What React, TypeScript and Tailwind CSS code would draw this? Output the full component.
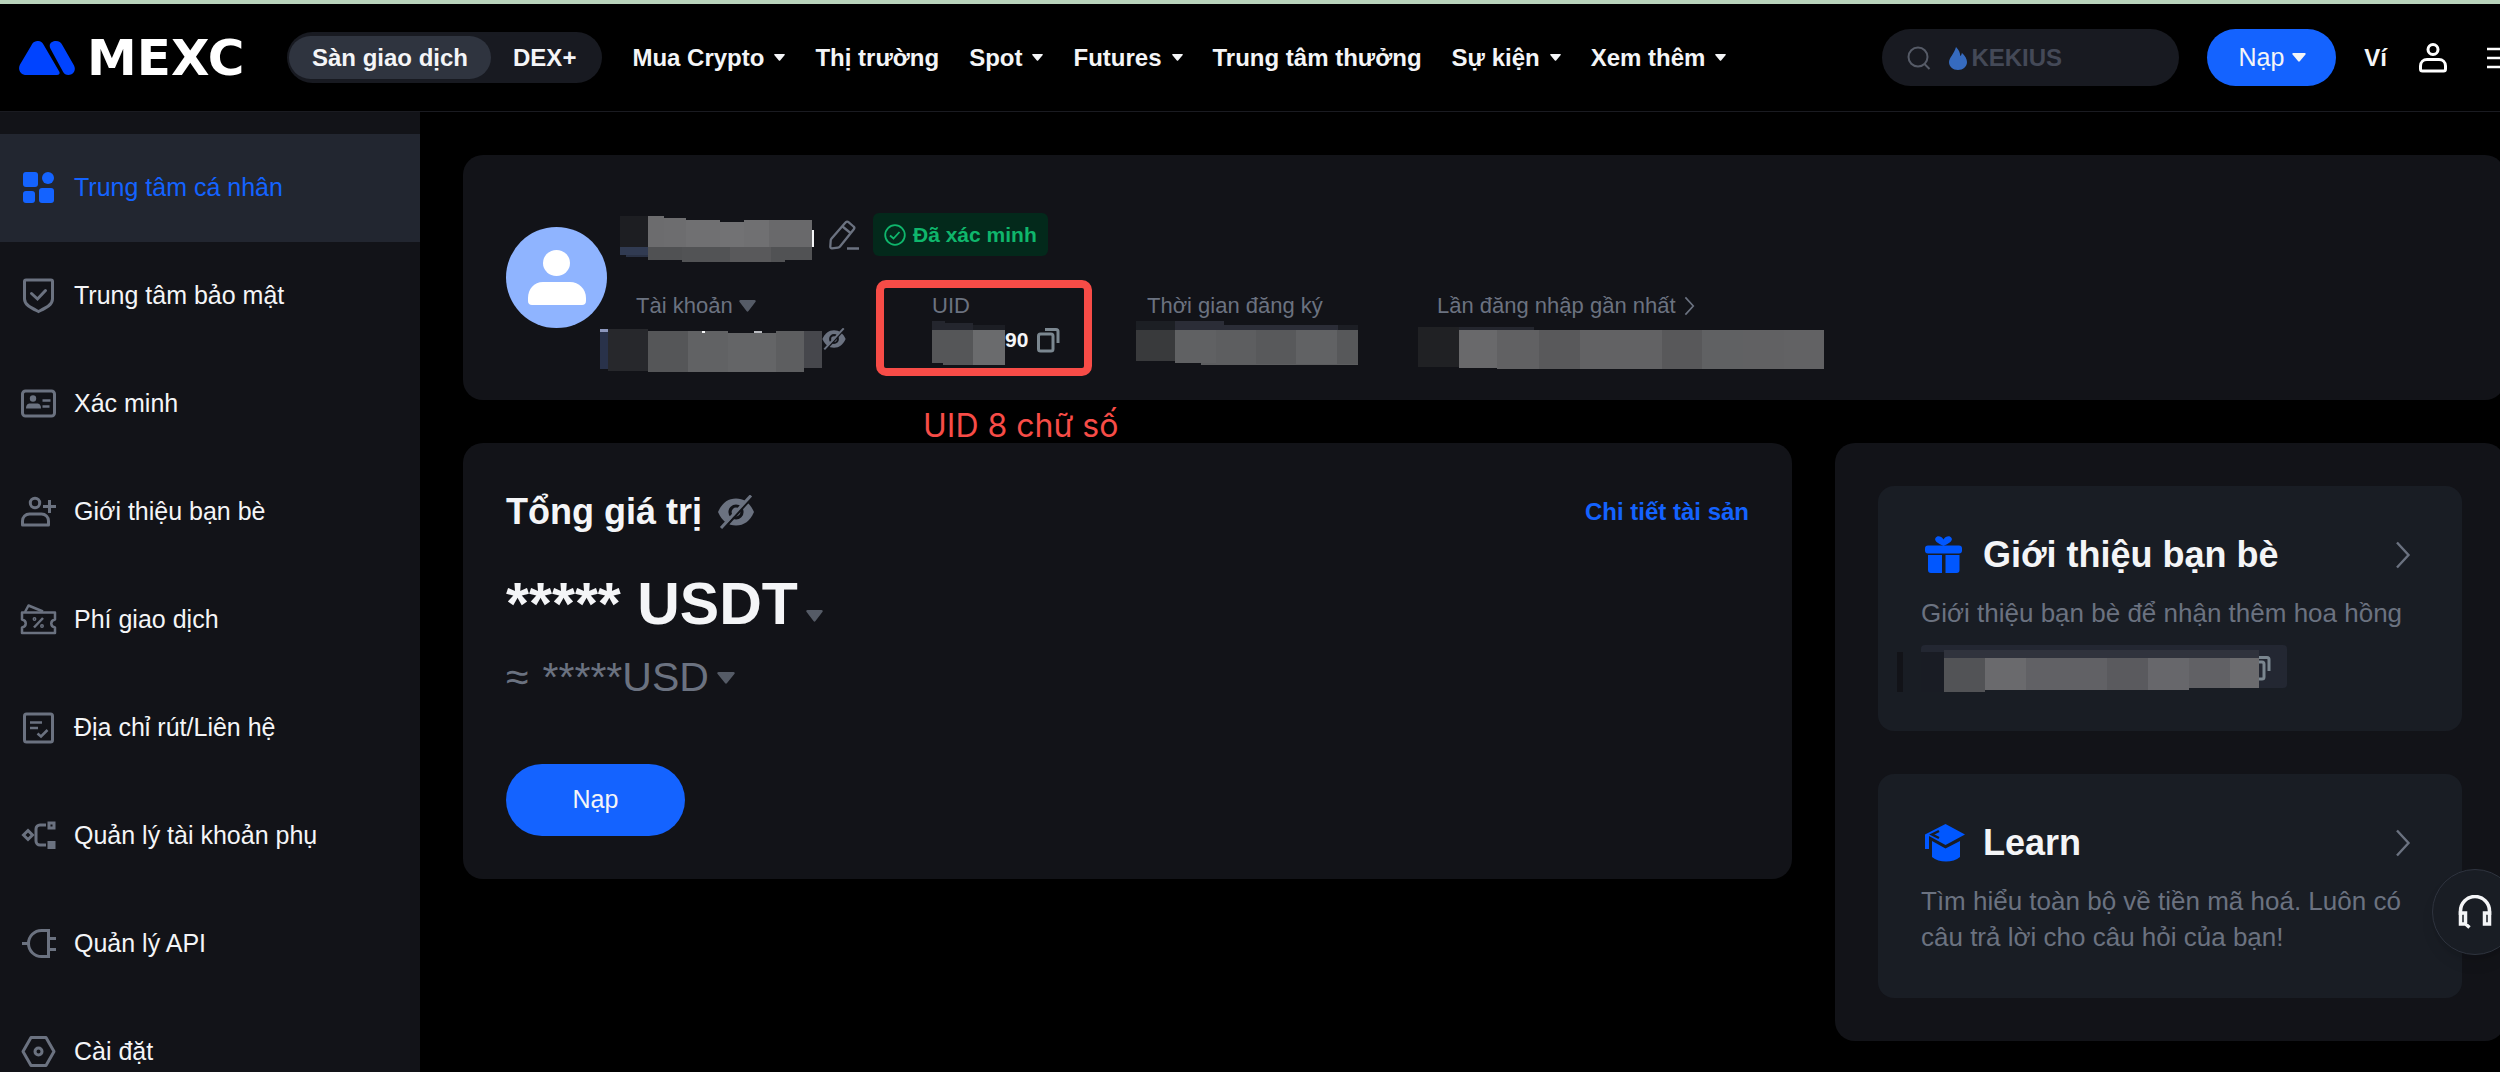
import { ReactNode, useState } from 'react';

type Block = [x: number, y: number, w: number, h: number, fill: string];

interface MosaicProps {
  width: number;
  height: number;
  blocks: Block[];
  className?: string;
}

// hides private values (name, balance, uid...) behind grey blocks
function Mosaic({ width, height, blocks, className = '' }: MosaicProps) {
  return (
    <svg
      width={width}
      height={height}
      className={`shrink-0 ${className}`}
      shapeRendering="crispEdges"
      aria-hidden="true"
    >
      {blocks.map(([x, y, w, h, fill], index) => (
        <rect key={index} x={x} y={y} width={w} height={h} fill={fill} />
      ))}
    </svg>
  );
}

const nameBlocks: Block[] = [
  [0, 3, 28, 31, '#1d1e22'],
  [0, 34, 28, 8, '#313b52'],
  [6, 42, 22, 2, '#2a3245'],
  [28, 3, 16, 31, '#6c6c6e'],
  [44, 5, 22, 29, '#6d6d6f'],
  [66, 7, 34, 27, '#707072'],
  [100, 9, 24, 25, '#727274'],
  [124, 7, 25, 27, '#707072'],
  [149, 7, 43, 27, '#69696b'],
  [28, 34, 34, 13, '#505153'],
  [62, 34, 48, 15, '#525355'],
  [110, 34, 41, 15, '#59595b'],
  [151, 34, 14, 15, '#515254'],
  [165, 34, 27, 13, '#515254'],
  [192, 17, 2, 17, '#f4f5f7'],
];

const accountBlocks: Block[] = [
  [0, 8, 8, 3, '#8c97bd'],
  [0, 11, 8, 37, '#29324a'],
  [8, 8, 40, 42, '#27282c'],
  [48, 10, 40, 41, '#555658'],
  [88, 10, 40, 41, '#616264'],
  [128, 12, 48, 39, '#646567'],
  [176, 10, 28, 41, '#5d5e60'],
  [204, 10, 18, 37, '#46474c'],
  [102, 10, 3, 2, '#f4f5f7'],
  [154, 10, 8, 2, '#b9bbc0'],
];

const uidBlocks: Block[] = [
  [0, 0, 13, 8, '#24262e'],
  [0, 2, 41, 7, '#24262e'],
  [41, 4, 32, 5, '#1c1e24'],
  [0, 9, 41, 33, '#555658'],
  [41, 9, 32, 35, '#6a6b6d'],
  [11, 42, 30, 2, '#555658'],
];

const registerBlocks: Block[] = [
  [0, 0, 39, 9, '#1c1f24'],
  [39, 0, 49, 9, '#2b2d37'],
  [88, 4, 114, 5, '#2b2d37'],
  [202, 4, 20, 5, '#1c1e24'],
  [0, 9, 39, 31, '#393a3c'],
  [39, 9, 41, 33, '#606163'],
  [65, 42, 157, 2, '#5c5d5f'],
  [80, 9, 40, 34, '#5d5e60'],
  [120, 9, 40, 34, '#58595b'],
  [160, 9, 41, 34, '#616264'],
  [201, 9, 21, 34, '#57585a'],
];

const loginBlocks: Block[] = [
  [0, 6, 41, 40, '#202124'],
  [41, 6, 75, 3, '#24262e'],
  [41, 9, 38, 38, '#69696b'],
  [79, 9, 42, 39, '#616163'],
  [121, 9, 41, 39, '#59595b'],
  [162, 9, 82, 39, '#626264'],
  [244, 9, 40, 39, '#58585a'],
  [284, 9, 41, 39, '#606163'],
  [325, 9, 41, 39, '#616163'],
  [366, 9, 40, 39, '#626264'],
];

const inviteBlocks: Block[] = [
  [0, 7, 6, 40, '#121318'],
  [24, 7, 23, 40, '#191c24'],
  [47, 5, 315, 8, '#30333d'],
  [47, 13, 41, 34, '#525356'],
  [88, 13, 41, 32, '#6a6a6d'],
  [129, 13, 81, 32, '#616165'],
  [210, 13, 41, 32, '#5a5a5e'],
  [251, 13, 41, 32, '#67676b'],
  [292, 13, 41, 30, '#616165'],
  [333, 13, 29, 30, '#6b6b6e'],
];

function Caret({ className = '' }: { className?: string }) {
  return (
    <svg viewBox="0 0 12 8" className={`shrink-0 ${className}`} fill="currentColor" preserveAspectRatio="none" aria-hidden="true">
      <path d="M1 0h10a.8.8 0 0 1 .7 1.2L6.700 7.400a.9.9 0 0 1-1.400 0L.3 1.200A.8.8 0 0 1 1 0Z" />
    </svg>
  );
}

function Chevron({ className = '' }: { className?: string }) {
  return (
    <svg
      viewBox="0 0 16 28"
      className={`shrink-0 ${className}`}
      fill="none"
      stroke="currentColor"
      strokeWidth="2.400"
      aria-hidden="true"
    >
      <path d="M2 1.500 13.500 14 2 26.500" />
    </svg>
  );
}

function EyeOff({ className = '' }: { className?: string }) {
  return (
    <svg viewBox="0 0 36 34" className={`shrink-0 ${className}`} fill="none" aria-hidden="true">
      <path d="M0 17C4 8 10 3.500 18 3.500S32 8 36 17C32 26 26 30.500 18 30.500S4 26 0 17Z" fill="#6b7280" />
      <circle cx="18" cy="17" r="6" stroke="#121318" strokeWidth="3.200" />
      <path d="M5 34.500 34.500 2" stroke="#121318" strokeWidth="2.500" />
      <path d="M3 33 33 0.500" stroke="#6b7280" strokeWidth="3" />
    </svg>
  );
}

function CopyIcon() {
  return (
    <svg viewBox="0 0 24 26" className="w-6 h-[26px] shrink-0" fill="none" stroke="#7b8790" strokeWidth="3" aria-hidden="true">
      <rect x="2.500" y="7" width="14.500" height="17" rx="2" />
      <path d="M9 2.500h11a2 2 0 0 1 2 2V16" />
    </svg>
  );
}

function LogoMark() {
  return (
    <svg viewBox="0 0 56 34" className="w-14 h-[34px] shrink-0" fill="#0043ff" aria-hidden="true">
      <path d="M12.300 4.600C14.200-1.300 22.300-1.500 24.600 3.700L40.200 30.500C41.400 32.700 40 34 38 34H7.500C1.500 34-1.500 28.500.9 23.800Z" />
      <path d="M31.500 7.700C29 2.500 33 0 37 0c3 0 5 1.500 6.300 4L55 24.500c2.500 5-1 9.500-5.500 9.500-2.500 0-4.300-1.200-5.500-3.300Z" />
    </svg>
  );
}

interface MenuItem {
  label: string;
  icon: ReactNode;
}

const menuItems: MenuItem[] = [
  {
    label: 'Trung tâm cá nhân',
    icon: (
      <g fill="#1463ff" stroke="none">
        <rect x="3" y="2" width="15" height="15" rx="3" />
        <circle cx="28" cy="8" r="6" />
        <rect x="3" y="21" width="12" height="12" rx="3" />
        <rect x="19" y="18" width="15" height="15" rx="3" />
      </g>
    ),
  },
  {
    label: 'Trung tâm bảo mật',
    icon: (
      <>
        <path d="M6 2h25a1.500 1.500 0 0 1 1.500 1.500V21c0 6-7 9-14 12.500C11.500 30 4.500 27 4.500 21V3.500A1.500 1.500 0 0 1 6 2Z" />
        <path d="m11.500 15.500 6 5.500 8-8.500" strokeLinecap="round" />
      </>
    ),
  },
  {
    label: 'Xác minh',
    icon: (
      <>
        <rect x="2.500" y="5" width="32" height="25" rx="3" />
        <g fill="#6b7280" stroke="none">
          <circle cx="13" cy="12.500" r="3.200" />
          <path d="M6 22.500c0-4 2-5 4-5h7c2 0 4 1 4 5Z" />
        </g>
        <path d="M22.500 14.500h8M22.500 20.500h7" strokeWidth="2.400" />
      </>
    ),
  },
  {
    label: 'Giới thiệu bạn bè',
    icon: (
      <>
        <circle cx="15" cy="9" r="4.700" />
        <path d="M2.500 31v-4c0-4 3-7 7-7h12c4 0 7 3 7 7v4Z" strokeLinejoin="round" />
        <path d="M23 12.500h13M29.500 6v13" />
      </>
    ),
  },
  {
    label: 'Phí giao dịch',
    icon: (
      <g strokeWidth="2.500" strokeLinejoin="round">
        <path d="M2 10.500h33v7c-5 1-5 7 0 8V31H2v-5.500c5-1 5-7 0-8Z" />
        <path d="M5 10 8.500 3.500 23 9.500" />
        <path d="m14 25.500 9-9.500" />
        <circle cx="14.500" cy="17" r=".7" />
        <circle cx="22" cy="24" r=".7" />
      </g>
    ),
  },
  {
    label: 'Địa chỉ rút/Liên hệ',
    icon: (
      <>
        <rect x="4.500" y="4" width="28" height="28" rx="2" />
        <path d="M10 12.500h12M10 18h8M17.500 23.500l3.500 3 6.500-6.500" strokeWidth="2.500" />
      </>
    ),
  },
  {
    label: 'Quản lý tài khoản phụ',
    icon: (
      <>
        <path d="m8 12.500 4.500 4.500L8 21.500 3.500 17Z" />
        <path d="M26 7h-6a4 4 0 0 0-4 4v12a4 4 0 0 0 4 4h6" />
        <rect x="29" y="5" width="5" height="5" />
        <rect x="27.500" y="23" width="8" height="8" fill="#6b7280" stroke="none" />
      </>
    ),
  },
  {
    label: 'Quản lý API',
    icon: <path d="M28.500 4.500h-7a13 13 0 0 0 0 26h7ZM8 17.500H2M29 12.500h7M29 23.500h7" />,
  },
  {
    label: 'Cài đặt',
    icon: (
      <>
        <path d="M11 3.500h15l8 14-8 14H11l-8-14Z" strokeLinejoin="round" />
        <circle cx="18.500" cy="17.500" r="3.500" />
      </>
    ),
  },
];

const navItems = [
  { label: 'Mua Crypto', dropdown: true },
  { label: 'Thị trường', dropdown: false },
  { label: 'Spot', dropdown: true },
  { label: 'Futures', dropdown: true },
  { label: 'Trung tâm thưởng', dropdown: false },
  { label: 'Sự kiện', dropdown: true },
  { label: 'Xem thêm', dropdown: true },
];

function Header() {
  return (
    <header className="shrink-0 border-t-4 border-t-[#b9d3bb] bg-black">
      <div className="flex items-center h-[108px] border-b border-[#1a1b21] pl-[19px]">
        <a href="#" className="flex items-center gap-3 w-[268px] shrink-0">
          <LogoMark />
          <span className="font-['DejaVu_Sans'] font-bold text-[50px] leading-[50px] text-white">MEXC</span>
        </a>

        <div className="flex items-center shrink-0 rounded-full bg-[#181a21] h-[51px] px-0.5 font-bold text-2xl">
          <button className="h-[43px] rounded-full bg-[#2f343f] px-[23px]">Sàn giao dịch</button>
          <button className="h-[43px] pl-[22px] pr-6">DEX+</button>
        </div>

        <nav className="flex items-center gap-[30px] ml-[30px] shrink-0 font-bold text-2xl whitespace-nowrap">
          {navItems.map(({ label, dropdown }) => (
            <a key={label} href="#" className="flex items-center gap-2.5">
              {label}
              {dropdown && <Caret className="w-[11px] h-[7px]" />}
            </a>
          ))}
        </nav>

        <div className="flex items-center ml-auto -mr-4 shrink-0 font-bold text-2xl">
          <label className="flex items-center w-[297px] h-[57px] rounded-full bg-[#181a21] px-[25px]">
            <svg viewBox="0 0 24 24" className="w-6 h-6 shrink-0" fill="none" stroke="#565b67" strokeWidth="2" aria-label="Tìm kiếm">
              <circle cx="11" cy="11" r="9.500" />
              <path d="m17.500 18 5 5" />
            </svg>
            <svg viewBox="0 0 18 24" className="w-[18px] h-6 ml-[18px] shrink-0" aria-hidden="true">
              <path
                d="M7 1c3 3 4 5.500 4.300 9 1-.8 1.500-2 1.500-3.300C16 9.500 18 13 18 16c0 4.500-4 8-9 8s-9-3.500-9-8c0-4 5-8 7-15Z"
                fill="#366bbf"
              />
            </svg>
            <input
              type="text"
              placeholder="KEKIUS"
              className="w-full min-w-0 ml-1 bg-transparent outline-none placeholder:text-[#444957]"
            />
          </label>
          <button className="flex items-center gap-2 h-[57px] ml-7 pl-[31px] pr-[30px] rounded-full bg-[#1463ff] text-[25px] font-normal">
            Nạp
            <Caret className="w-3.5 h-[9px]" />
          </button>
          <a href="#" className="ml-7">
            Ví
          </a>
          <button className="ml-8" aria-label="Tài khoản">
            <svg viewBox="0 0 28 30" className="w-7 h-[30px]" fill="none" stroke="#fff" strokeWidth="3" aria-hidden="true">
              <circle cx="14" cy="6.500" r="5" />
              <path d="M1.500 26v-3c0-4 3-6.500 6.500-6.500h12c3.500 0 6.500 2.500 6.500 6.500v3a2 2 0 0 1-2 2h-21a2 2 0 0 1-2-2Z" />
            </svg>
          </button>
          <button className="ml-10" aria-label="Menu">
            <svg viewBox="0 0 29 22" className="w-[29px] h-[22px]" stroke="#fff" strokeWidth="2.500" aria-hidden="true">
              <path d="M0 2h29M0 11h29M0 20h29" />
            </svg>
          </button>
        </div>
      </div>
    </header>
  );
}

function Sidebar() {
  const [active, setActive] = useState(0);

  return (
    <aside className="w-[420px] shrink-0 overflow-hidden bg-[#121318] pt-[22px]">
      {menuItems.map(({ label, icon }, index) => (
        <a
          key={label}
          href="#"
          onClick={() => setActive(index)}
          className={`flex items-center gap-[17px] h-[108px] pl-5 text-[25px] ${
            index === active ? 'bg-[#222630] text-[#1463ff]' : ''
          }`}
        >
          <svg
            viewBox="0 0 37 37"
            className="w-[37px] h-[37px] shrink-0"
            fill="none"
            stroke="#6b7280"
            strokeWidth="3"
            aria-hidden="true"
          >
            {icon}
          </svg>
          {label}
        </a>
      ))}
    </aside>
  );
}

function Profile() {
  return (
    <section className="flex items-start h-[245px] rounded-[20px] bg-[#121318] pt-[58px] pl-[43px]">
      <svg viewBox="0 0 101 101" className="w-[101px] h-[101px] mt-3.5 shrink-0" fill="#fff" aria-hidden="true">
        <circle cx="50.500" cy="50.500" r="50.500" fill="#8fb4ff" />
        <ellipse cx="50.500" cy="36" rx="13.500" ry="13" />
        <path d="M22 74v-3c0-9 6-16 15-16h27c9 0 16 7 16 16v3c0 2.500-1.500 4-4 4H26c-2.500 0-4-1.500-4-4Z" />
      </svg>

      <div className="ml-[13px]">
        <div className="flex items-start h-[43px]">
          <Mosaic width={194} height={50} blocks={nameBlocks} />
          <button className="ml-[15px] mt-[7px]" aria-label="Sửa tên">
            <svg
              viewBox="0 0 30 30"
              className="w-[30px] h-[30px]"
              fill="none"
              stroke="#6b7280"
              strokeWidth="2.300"
              strokeLinejoin="round"
              aria-hidden="true"
            >
              <path d="M16.500 2.500a2 2 0 0 1 3-.3l5 4.300a2 2 0 0 1 .3 2.800L11 26.500a3 3 0 0 1-2 1.100l-6 .7a1.500 1.500 0 0 1-1.700-1.600l.4-6.200a3 3 0 0 1 .7-1.800Z" />
              <path d="m13.500 6.500 8 6.500M18 28.500h12" />
            </svg>
          </button>
          <span className="flex items-center gap-[7px] h-[43px] ml-3.5 px-[11px] rounded-md bg-[#03291b] font-bold text-[21px] text-[#0fb66c]">
            <svg viewBox="0 0 22 22" className="w-[22px] h-[22px]" fill="none" stroke="currentColor" strokeWidth="1.800" aria-hidden="true">
              <circle cx="11" cy="11" r="9.800" />
              <path d="m6 11.500 3.500 3 6-6.500" />
            </svg>
            Đã xác minh
          </span>
        </div>

        <div className="flex mt-[35px] ml-4 text-[22px] leading-[30px] text-[#6b7280]">
          <div className="w-[296px]">
            <button className="flex items-center gap-1.5 h-[30px]">
              Tài khoản
              <Caret className="w-[17px] h-3 text-[#555b66]" />
            </button>
            <div className="flex items-start h-[52px]">
              <Mosaic width={222} height={52} blocks={accountBlocks} className="-ml-9" />
              <EyeOff className="w-6 h-[22px] mt-[7px]" />
            </div>
          </div>

          <div className="relative w-[215px]">
            <p>UID</p>
            <div className="flex items-start h-[52px]">
              <Mosaic width={73} height={52} blocks={uidBlocks} />
              <span className="font-bold text-[21px] leading-[38px] text-[#f4f5f7]">90</span>
              <button className="ml-2 mt-1.5" aria-label="Sao chép UID">
                <CopyIcon />
              </button>
            </div>
            <div className="absolute -left-14 -top-[11px] w-[216px] h-24 rounded-[10px] border-8 border-[#f74c47]" />
            <p className="absolute -left-[9px] top-[117px] font-['Inter'] text-[32px] leading-9 whitespace-nowrap text-[#f74c47]">
              UID 8 chữ số
            </p>
          </div>

          <div className="w-[290px]">
            <p>Thời gian đăng ký</p>
            <Mosaic width={222} height={52} blocks={registerBlocks} className="-ml-[11px]" />
          </div>

          <div>
            <a href="#" className="flex items-center gap-2">
              Lần đăng nhập gần nhất
              <Chevron className="w-[11px] h-5" />
            </a>
            <Mosaic width={406} height={52} blocks={loginBlocks} className="-ml-[19px]" />
          </div>
        </div>
      </div>
    </section>
  );
}

function Balance() {
  return (
    <section className="flex-1 self-start rounded-[20px] bg-[#121318] p-[43px]">
      <div className="flex items-center justify-between h-[52px]">
        <h2 className="flex items-center gap-4 font-bold text-4xl">
          Tổng giá trị
          <EyeOff className="w-9 h-[34px]" />
        </h2>
        <a href="#" className="font-bold text-2xl text-[#1463ff]">
          Chi tiết tài sản
        </a>
      </div>
      <button className="flex items-end gap-2 mt-7 h-[76px] font-bold text-[59px] leading-[76px]">
        ***** USDT
        <Caret className="w-[17px] h-3 mb-5 text-[#555b66]" />
      </button>
      <button className="flex items-center gap-2 mt-2 h-14 text-[41px] text-[#6b7280]">
        <span className="mr-1.5">≈</span>
        *****USD
        <Caret className="w-[18px] h-3 text-[#555b66]" />
      </button>
      <button className="block h-[72px] w-[179px] mt-[58px] rounded-full bg-[#1463ff] text-[25px]">Nạp</button>
    </section>
  );
}

interface PromoProps {
  title: string;
  description: string;
  icon: ReactNode;
  children?: ReactNode;
}

function Promo({ title, description, icon, children }: PromoProps) {
  return (
    <article className="rounded-2xl bg-[#191d24] p-[43px]">
      <a href="#" className="flex items-center h-[52px]">
        <svg viewBox="0 0 40 38" className="w-10 h-[38px] ml-1 mr-[18px] shrink-0" fill="#0057ff" aria-hidden="true">
          {icon}
        </svg>
        <h3 className="font-bold text-4xl">{title}</h3>
        <Chevron className="w-4 h-7 ml-auto mr-2 text-[#6b7280]" />
      </a>
      <p className="mt-3.5 text-[26px] leading-9 whitespace-pre-line text-[#6b7280]">{description}</p>
      {children}
    </article>
  );
}

function Promos() {
  return (
    <section className="flex flex-col gap-[43px] w-[670px] shrink-0 rounded-[20px] bg-[#121318] p-[43px]">
      <Promo
        title="Giới thiệu bạn bè"
        description="Giới thiệu bạn bè để nhận thêm hoa hồng"
        icon={
          <>
            <path d="M18.500 10C12 7 9 4.500 10.500 2c2-3 6-1.500 8 1.500 2-3 6-4.500 8-1.500 1.500 2.500-1.500 5-8 8Z" />
            <rect y="9.500" width="37" height="8" rx="3" />
            <path d="M3 19h14v18H6a3 3 0 0 1-3-3ZM20.500 19h14v15a3 3 0 0 1-3 3h-11Z" />
          </>
        }
      >
        <div className="flex items-start justify-between w-[366px] h-[43px] mt-3.5 rounded bg-[#232732]">
          <Mosaic width={362} height={48} blocks={inviteBlocks} className="-ml-6" />
          <button className="-ml-3 mr-4 mt-2.5 w-3 h-[26px] flex justify-end overflow-hidden" aria-label="Sao chép liên kết">
            <CopyIcon />
          </button>
        </div>
      </Promo>
      <Promo
        title="Learn"
        description={'Tìm hiểu toàn bộ về tiền mã hoá. Luôn có\ncâu trả lời cho câu hỏi của bạn!'}
        icon={
          <>
            <path d="M20.500 0 40 10.500 20.500 21 4 12v13H0V10.500Z" />
            <path d="m7 17 13.500 7.500L35 17v16c-7 6-21 6-28 0Z" />
            <path d="m14 7-7 3.500 7 3.500" fill="none" stroke="#191d24" strokeWidth="2.500" />
          </>
        }
      />
    </section>
  );
}

export default function App() {
  return (
    <div className="relative flex flex-col h-screen overflow-hidden bg-black font-['Liberation_Sans',sans-serif] text-[#f4f5f7]">
      <Header />
      <div className="flex flex-1 min-h-0">
        <Sidebar />
        <main className="flex flex-1 flex-col gap-[43px] min-w-0 pt-[43px] pl-[43px] -mr-[5px]">
          <Profile />
          <div className="flex items-start gap-[43px]">
            <Balance />
            <Promos />
          </div>
        </main>
      </div>
      <button
        className="absolute -right-[18px] bottom-[117px] flex items-center justify-center w-[86px] h-[86px] rounded-full border border-[#2f343f] bg-[#191d24] shadow-lg"
        aria-label="Hỗ trợ"
      >
        <svg viewBox="0 0 34 34" className="w-[34px] h-[34px]" fill="none" stroke="#f4f5f7" strokeWidth="3.500" aria-hidden="true">
          <path d="M2.500 20v-4a14.500 14.500 0 0 1 29 0v4" />
          <path d="M2.500 18h5v11h-5ZM31.500 18h-5v11h5ZM6.500 28l5 4.500" />
        </svg>
      </button>
    </div>
  );
}
